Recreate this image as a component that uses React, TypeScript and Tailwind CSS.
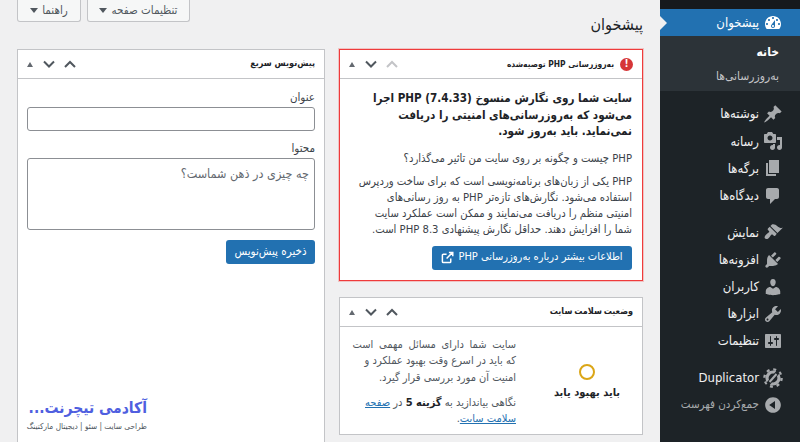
import type { ReactNode } from 'react';

const font = "[font-family:'DejaVu_Sans_Condensed','DejaVu_Sans',sans-serif]";

const icons: Record<string, string> = {
  dashboard:
    'M3.76 16h12.48c1.1-1.37 1.76-3.11 1.76-5 0-4.42-3.58-8-8-8s-8 3.58-8 8c0 1.89.66 3.63 1.76 5zM10 4c.55 0 1 .45 1 1s-.45 1-1 1-1-.45-1-1 .45-1 1-1zM6 6c.55 0 1 .45 1 1s-.45 1-1 1-1-.45-1-1 .45-1 1-1zm8 0c.55 0 1 .45 1 1s-.45 1-1 1-1-.45-1-1 .45-1 1-1zm-5.37 5.55L12 7v6c0 1.1-.9 2-2 2s-2-.9-2-2c0-.57.24-1.08.63-1.45zM4 10c.55 0 1 .45 1 1s-.45 1-1 1-1-.45-1-1 .45-1 1-1zm12 0c.55 0 1 .45 1 1s-.45 1-1 1-1-.45-1-1 .45-1 1-1zm-5 3c0-.55-.45-1-1-1s-1 .45-1 1 .45 1 1 1 1-.45 1-1z',
  pin: 'M10.44 3.02l1.82-1.82 6.36 6.35-1.83 1.82c-1.05-.68-2.48-.57-3.41.36l-.75.75c-.92.93-1.04 2.35-.35 3.41l-1.83 1.82-2.41-2.41-2.8 2.79c-.42.42-3.38 2.71-3.8 2.29s1.86-3.39 2.28-3.81l2.79-2.79L4.1 9.36l1.83-1.82c1.05.69 2.48.57 3.4-.36l.75-.75c.93-.92 1.05-2.35.36-3.41z',
  media:
    'M13 11V4c0-.55-.45-1-1-1h-1.67L9 1H5L3.67 3H2c-.55 0-1 .45-1 1v7c0 .55.45 1 1 1h10c.55 0 1-.45 1-1zM7 4.5c1.38 0 2.5 1.12 2.5 2.5S8.38 9.5 7 9.5 4.5 8.38 4.5 7 5.62 4.5 7 4.5zM14 6h5v10.5c0 1.38-1.12 2.5-2.5 2.5S14 17.88 14 16.5s1.12-2.5 2.5-2.5c.17 0 .34.02.5.05V9h-3V6zm-4 8.05V13h2v3.5c0 1.38-1.12 2.5-2.5 2.5S7 17.88 7 16.5 8.12 14 9.5 14c.17 0 .34.02.5.05z',
  page: 'M6 15V2h10v13H6zm-1 1h8v2H3V5h2v11z',
  comment: 'M5 2h9c1.1 0 2 .9 2 2v7c0 1.1-.9 2-2 2h-2l-5 5v-5H5c-1.1 0-2-.9-2-2V4c0-1.1.9-2 2-2z',
  brush:
    'M14.48 11.06L7.41 3.99l1.5-1.5c.5-.56 2.3-.47 3.51.32 1.21.8 1.43 1.28 2.91 2.1 1.18.64 2.45 1.26 4.45.85zm-.71.71L6.7 4.7 4.93 6.47c-.39.39-.39 1.02 0 1.41l1.06 1.06c.39.39.39 1.03 0 1.42-.6.6-1.43 1.11-2.21 1.69-.35.26-.7.53-1.01.84-1.43 1.43-1.4 3.04-.71 3.73s2.3.72 3.73-.71c.31-.31.58-.66.84-1.01.58-.78 1.09-1.61 1.69-2.21.39-.39 1.03-.39 1.42 0l1.06 1.06c.39.39 1.02.39 1.41 0z',
  plug: 'M13.11 4.36L9.87 7.6 8 5.73l3.24-3.24c.35-.34 1.05-.2 1.56.32.52.51.66 1.21.31 1.55zm-8 1.77l.91-1.12 9.01 9.01-1.19.84c-.71.71-2.63 1.16-3.82 1.16H6.14L4.9 17.26c-.59.59-1.54.59-2.12 0-.59-.58-.59-1.53 0-2.12l1.24-1.24v-3.88c0-1.13.4-3.19 1.09-3.89zm7.26 3.97l3.24-3.24c.34-.35 1.04-.21 1.55.31.52.51.66 1.21.31 1.55l-3.24 3.25z',
  user: 'M10 9.25c-2.27 0-2.73-3.44-2.73-3.44C7 4.02 7.82 2 9.97 2c2.16 0 2.98 2.02 2.71 3.81 0 0-.41 3.44-2.68 3.44zm0 2.57L12.72 10c2.39 0 4.52 2.33 4.52 4.53v2.49s-3.65 1.13-7.24 1.13c-3.65 0-7.24-1.13-7.24-1.13v-2.49c0-2.25 1.94-4.48 4.47-4.48z',
  wrench:
    'M16.68 9.77c-1.34 1.34-3.3 1.67-4.95.99l-5.41 6.52c-.99.99-2.59.99-3.58 0s-.99-2.59 0-3.57l6.52-5.42c-.68-1.65-.35-3.61.99-4.95 1.28-1.28 3.12-1.62 4.72-1.06l-2.89 2.89 2.82 2.82 2.86-2.87c.53 1.58.18 3.39-1.08 4.65zM3.81 16.21c.4.39 1.04.39 1.43 0 .4-.4.4-1.04 0-1.43-.39-.4-1.03-.4-1.43 0-.39.39-.39 1.03 0 1.43z',
  sliders:
    'M18 16V4c0-.55-.45-1-1-1H3c-.55 0-1 .45-1 1v12c0 .55.45 1 1 1h14c.55 0 1-.45 1-1zM8 11h1c.55 0 1 .45 1 1s-.45 1-1 1H8v1.5c0 .28-.22.5-.5.5s-.5-.22-.5-.5V13H6c-.55 0-1-.45-1-1s.45-1 1-1h1V5.5c0-.28.22-.5.5-.5s.5.22.5.5V11zm5-2h-1c-.55 0-1-.45-1-1s.45-1 1-1h1V5.5c0-.28.22-.5.5-.5s.5.22.5.5V7h1c.55 0 1 .45 1 1s-.45 1-1 1h-1v5.5c0 .28-.22.5-.5.5s-.5-.22-.5-.5V9z',
  collapse: 'M10 2.16c4.33 0 7.84 3.51 7.84 7.84s-3.51 7.84-7.84 7.84S2.16 14.33 2.16 10 5.67 2.16 10 2.16zM8 6.12v7.76L13.82 10z',
};

function Dashicon({ name, className }: { name: string; className?: string }) {
  return (
    <svg viewBox="0 0 20 20" fill="currentColor" className={className}>
      <path d={icons[name]} />
    </svg>
  );
}

function DuplicatorIcon() {
  return (
    <svg viewBox="0 0 20 20" className="h-5 w-5 text-[#a7aaad]">
      <circle cx="10" cy="10" r="6" fill="none" stroke="currentColor" strokeWidth="3.2" />
      <circle cx="10" cy="10" r="8.6" fill="none" stroke="currentColor" strokeWidth="2.4" strokeDasharray="3 3.75" />
      <path d="M5 16L15 4" stroke="#1d2327" strokeWidth="4" />
      <path d="M6.5 14L13.5 6" stroke="currentColor" strokeWidth="2" />
    </svg>
  );
}

function IconSlot({ children }: { children: ReactNode }) {
  return <span className="flex w-[41px] shrink-0 justify-start pr-[17px] text-[#a7aaad]">{children}</span>;
}

function MenuItem({ icon, label }: { icon: ReactNode; label: string }) {
  return (
    <div className="flex h-[27.2px] items-center text-[13px] text-[#f0f0f1]">
      <IconSlot>{icon}</IconSlot>
      <span className="whitespace-nowrap">{label}</span>
    </div>
  );
}

function Sidebar() {
  const first = [
    ['pin', 'نوشته‌ها'],
    ['media', 'رسانه'],
    ['page', 'برگه‌ها'],
    ['comment', 'دیدگاه‌ها'],
  ];
  const second = [
    ['brush', 'نمایش'],
    ['plug', 'افزونه‌ها'],
    ['user', 'کاربران'],
    ['wrench', 'ابزارها'],
    ['sliders', 'تنظیمات'],
  ];
  return (
    <aside className="h-full w-[140px] shrink-0 bg-[#1d2327]">
      <div className="h-[9px] bg-[#16191c]" />
      <div className="relative flex h-[27px] items-center bg-[#2271b1] text-[13px] text-white">
        <span className="flex w-[41px] shrink-0 justify-start pr-[17px]">
          <Dashicon name="dashboard" className="h-5 w-5" />
        </span>
        <span>پیشخوان</span>
        <span className="absolute left-0 top-[7px] h-0 w-0 border-y-[7px] border-l-[7px] border-y-transparent border-l-[#f0f0f1]" />
      </div>
      <div className="flex h-[55px] flex-col justify-center gap-[6px] bg-[#2c3338] pr-[21px] pt-[1px] text-[12px]">
        <div className="font-bold text-white">خانه</div>
        <div className="text-[#c3c4c7]">به‌روزرسانی‌ها</div>
      </div>
      <div className="pt-[9.5px]">
        {first.map(([n, l]) => (
          <MenuItem key={n} icon={<Dashicon name={n} className="h-5 w-5" />} label={l} />
        ))}
      </div>
      <div className="pt-[9.5px]">
        {second.map(([n, l]) => (
          <MenuItem key={n} icon={<Dashicon name={n} className="h-5 w-5" />} label={l} />
        ))}
      </div>
      <div className="pt-[9.5px]">
        <MenuItem icon={<DuplicatorIcon />} label="Duplicator" />
        <div className="flex h-[27px] items-center text-[11.5px] text-[#a7aaad]">
          <IconSlot>
            <Dashicon name="collapse" className="h-5 w-5 -scale-x-100" />
          </IconSlot>
          <span>جمع‌کردن فهرست</span>
        </div>
      </div>
    </aside>
  );
}

function Handles({ dimUp }: { dimUp?: boolean }) {
  return (
    <div className="flex items-center gap-[9px] pl-[3px]">
      <svg viewBox="0 0 12 12" className={`h-3 w-3 ${dimUp ? 'text-[#c3c4c7]' : 'text-[#50575e]'}`} fill="none" stroke="currentColor" strokeWidth="2">
        <path d="M1 9l5-5 5 5" />
      </svg>
      <svg viewBox="0 0 12 12" className="h-3 w-3 text-[#50575e]" fill="none" stroke="currentColor" strokeWidth="2">
        <path d="M1 3.5l5 5 5-5" />
      </svg>
      <span className="ml-[3px] mr-[1px] h-0 w-0 border-x-[3.5px] border-b-[5px] border-x-transparent border-b-[#646970]" />
    </div>
  );
}

function BoxHead({ title, children, dimUp, titleClass = 'text-[9px]' }: { title: string; children?: ReactNode; dimUp?: boolean; titleClass?: string }) {
  return (
    <div className="flex h-[29px] items-center justify-between border-b border-[#c3c4c7] pl-[3px] pr-[9px]">
      <div className="flex items-center gap-[6px] font-bold text-[#1d2327]">
        {children}
        <span className={titleClass}>{title}</span>
      </div>
      <Handles dimUp={dimUp} />
    </div>
  );
}

function ExternalIcon() {
  return (
    <svg viewBox="0 0 14 14" className="h-[13px] w-[13px]" fill="none" stroke="currentColor" strokeWidth="1.6">
      <path d="M10.5 8v3.5a1 1 0 0 1-1 1h-7a1 1 0 0 1-1-1v-7a1 1 0 0 1 1-1H6" />
      <path d="M6 8l6-6M8.5 1.5h4.2v4.2" />
    </svg>
  );
}

function PhpBox() {
  return (
    <section className="h-[232px] border border-[#ef3b3b] bg-white shadow-[0_0_0_1px_rgba(239,59,59,0.25)]">
      <BoxHead title="به‌روزرسانی PHP توصیه‌شده" dimUp titleClass="text-[8.4px]">
        <span className="flex h-[13px] w-[13px] items-center justify-center rounded-full bg-[#d63638] text-[10px] font-bold leading-none text-white">!</span>
      </BoxHead>
      <div className="px-[10px] pt-[11px] text-[#3c434a]">
        <p className="text-[11.6px] font-bold leading-[16.5px] text-[#1d2327]">
          سایت شما روی نگارش منسوخ (7.4.33) PHP اجرا
          <br />
          می‌شود که به‌روزرسانی‌های امنیتی را دریافت
          <br />
          نمی‌نماید. باید به‌روز شود.
        </p>
        <p className="mt-[11px] text-[11.2px] leading-[16px]">PHP چیست و چگونه بر روی سایت من تاثیر می‌گذارد؟</p>
        <p className="mt-[7px] text-[11.2px] leading-[16px]">
          PHP یکی از زبان‌های برنامه‌نویسی است که برای ساخت وردپرس
          <br />
          استفاده می‌شود. نگارش‌های تازه‌تر PHP به روز رسانی‌های
          <br />
          امنیتی منظم را دریافت می‌نمایند و ممکن است عملکرد سایت
          <br />
          شما را افزایش دهند. حداقل نگارش پیشنهادی PHP 8.3 است.
        </p>
        <a className="mt-[8px] flex h-[24px] w-[200px] items-center justify-center gap-[4px] rounded-[3px] bg-[#2271b1] text-[11px] text-white">
          <span>اطلاعات بیشتر درباره به‌روزرسانی PHP</span>
          <ExternalIcon />
        </a>
      </div>
    </section>
  );
}

function HealthBox() {
  return (
    <section className="mt-[16px] h-[138px] border border-[#c3c4c7] bg-white">
      <BoxHead title="وضعیت سلامت سایت" titleClass="text-[9px] [word-spacing:-1px]" />
      <div className="flex">
        <div className="ml-[16px] flex w-[110px] shrink-0 flex-col items-center pt-[37px]">
          <span className="h-[16px] w-[16px] rounded-full border-2 border-[#dba617]" />
          <span className="mt-[5px] text-[11px] font-bold text-[#1d2327]">باید بهبود یابد</span>
        </div>
        <div className="text-[11px] leading-[16.3px] text-[#50575e]">
          <p className="pt-[10px]">
            <span className="[word-spacing:2.5px]">سایت شما دارای مسائل مهمی است</span>
            <br />
            که باید در اسرع وقت بهبود عملکرد و
            <br />
            امنیت آن مورد بررسی قرار گیرد.
          </p>
          <p className="mt-[9px]">
            نگاهی بیاندازید به <b className="text-[#1d2327]">گزینه 5</b> در{' '}
            <a className="text-[#2271b1] underline">صفحه</a>
            <br />
            <a className="text-[#2271b1] underline">سلامت سایت</a>.
          </p>
        </div>
      </div>
    </section>
  );
}

function DraftBox() {
  return (
    <section className="relative h-[400px] border border-[#c3c4c7] bg-white">
      <BoxHead title="پیش‌نویس سریع" />
      <div className="px-[9px] pt-[10px] text-[11.5px] text-[#3c434a]">
        <label className="block leading-[17px]">عنوان</label>
        <div className="mt-[1px] h-[24px] rounded-[3px] border border-[#8c8f94] bg-white" />
        <label className="mt-[9px] block leading-[17px]">محتوا</label>
        <div className="mt-[1px] h-[72px] rounded-[3px] border border-[#8c8f94] bg-white px-[5px] pb-[4px] pt-[6px] text-[12.5px] text-[#646970]">
          چه چیزی در ذهن شماست؟
        </div>
        <button className={`mt-[10px] block h-[24px] w-[89px] rounded-[3px] bg-[#2271b1] text-[11.5px] text-white ${font}`}>ذخیره پیش‌نویس</button>
      </div>
      {/* watermark */}
      <div className="absolute bottom-[17px] left-[9px] w-[120px] text-right">
        <div className="whitespace-nowrap text-[15.5px] font-bold leading-[22px] text-[#4f5fe0]">آکادمی تیچرنت...</div>
        <div className="mt-[2px] whitespace-nowrap text-[8.2px] leading-[10px] text-[#50575e]">طراحی سایت | سئو | دیجیتال مارکتینگ</div>
      </div>
    </section>
  );
}

function TopButton({ children }: { children: ReactNode }) {
  return (
    <div className="flex h-[30px] items-center justify-center gap-[4px] rounded-b-[3px] border border-t-0 border-[#c3c4c7] bg-[#f6f7f7] pt-[8px] text-[11.5px] text-[#50575e]">
      {children}
      <span className="h-0 w-0 border-x-[4px] border-t-[5px] border-x-transparent border-t-[#50575e]" />
    </div>
  );
}

export default function App() {
  return (
    <div dir="rtl" className={`flex h-[442px] w-[800px] overflow-hidden bg-[#f0f0f1] ${font}`}>
      <Sidebar />
      <main className="flex-1 px-[17px]">
        <div className="flex h-[49px] items-start justify-between">
          <h1 className="pt-[11px] text-[16px] font-medium leading-[27px] text-[#1d2327]">پیشخوان</h1>
          <div className="-mt-[8px] flex gap-[6px]">
            <div className="w-[103px]"><TopButton>تنظیمات صفحه</TopButton></div>
            <div className="w-[64px]"><TopButton>راهنما</TopButton></div>
          </div>
        </div>
        <div className="flex gap-[14px]">
          <div className="w-[304px] shrink-0">
            <PhpBox />
            <HealthBox />
          </div>
          <div className="w-[308px] shrink-0">
            <DraftBox />
          </div>
        </div>
      </main>
    </div>
  );
}
